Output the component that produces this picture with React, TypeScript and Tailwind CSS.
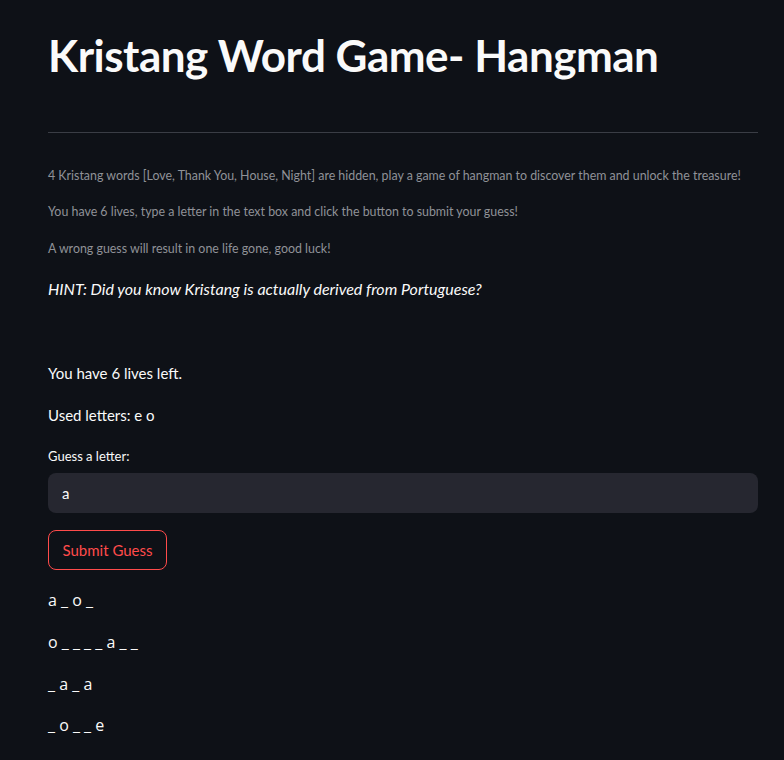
export default function App() {
  const rows = ["a _ o _", "o _ _ _ _ a _ _", "_ a _ a", "_ o _ _ e"];

  return (
    <div className="min-h-screen bg-[#0e1117] text-[#fafafa] font-['Lato',sans-serif]">
      <div className="pl-12 pr-[26px] pt-[29px]">
        <h1 className="text-[44px] leading-[52px] font-bold tracking-[-0.5px]">
          Kristang Word Game- Hangman
        </h1>
        <hr className="mt-[51px] border-0 border-t border-[#3a3d45]" />

        <p className="mt-[33px] text-[12.4px] leading-[20px] text-[#909298] whitespace-nowrap">
          4 Kristang words [Love, Thank You, House, Night] are hidden, play a game of hangman to discover them and unlock the treasure!
        </p>
        <p className="mt-[16px] text-[12.4px] leading-[20px] text-[#909298]">
          You have 6 lives, type a letter in the text box and click the button to submit your guess!
        </p>
        <p className="mt-[17px] text-[12.4px] leading-[20px] text-[#909298]">
          A wrong guess will result in one life gone, good luck!
        </p>
        <p className="mt-[18px] text-[16px] leading-[24px] italic">
          HINT: Did you know Kristang is actually derived from Portuguese?
        </p>

        <p className="mt-[60px] text-[15px] leading-[24px]">You have 6 lives left.</p>
        <p className="mt-[18px] text-[15px] leading-[24px]">Used letters: e o</p>

        <label className="block mt-[19px] text-[13px] leading-[20px]">Guess a letter:</label>
        <div className="mt-[7px] h-10 rounded-lg bg-[#262730] flex items-center px-[14px] text-[15px]">
          a
        </div>

        <button className="mt-[17px] h-10 w-[119px] rounded-lg border border-[#ff4b4b] text-[#ff4b4b] text-[15px] bg-transparent">
          Submit Guess
        </button>

        <div className="font-['Open_Sans',sans-serif] text-[16px] font-medium">
          {rows.map((r, i) => (
            <p key={i} className={`${i === 3 ? "mt-[17px]" : "mt-[18px]"} leading-[24px] whitespace-pre`}>
              {r}
            </p>
          ))}
        </div>
      </div>
    </div>
  );
}
